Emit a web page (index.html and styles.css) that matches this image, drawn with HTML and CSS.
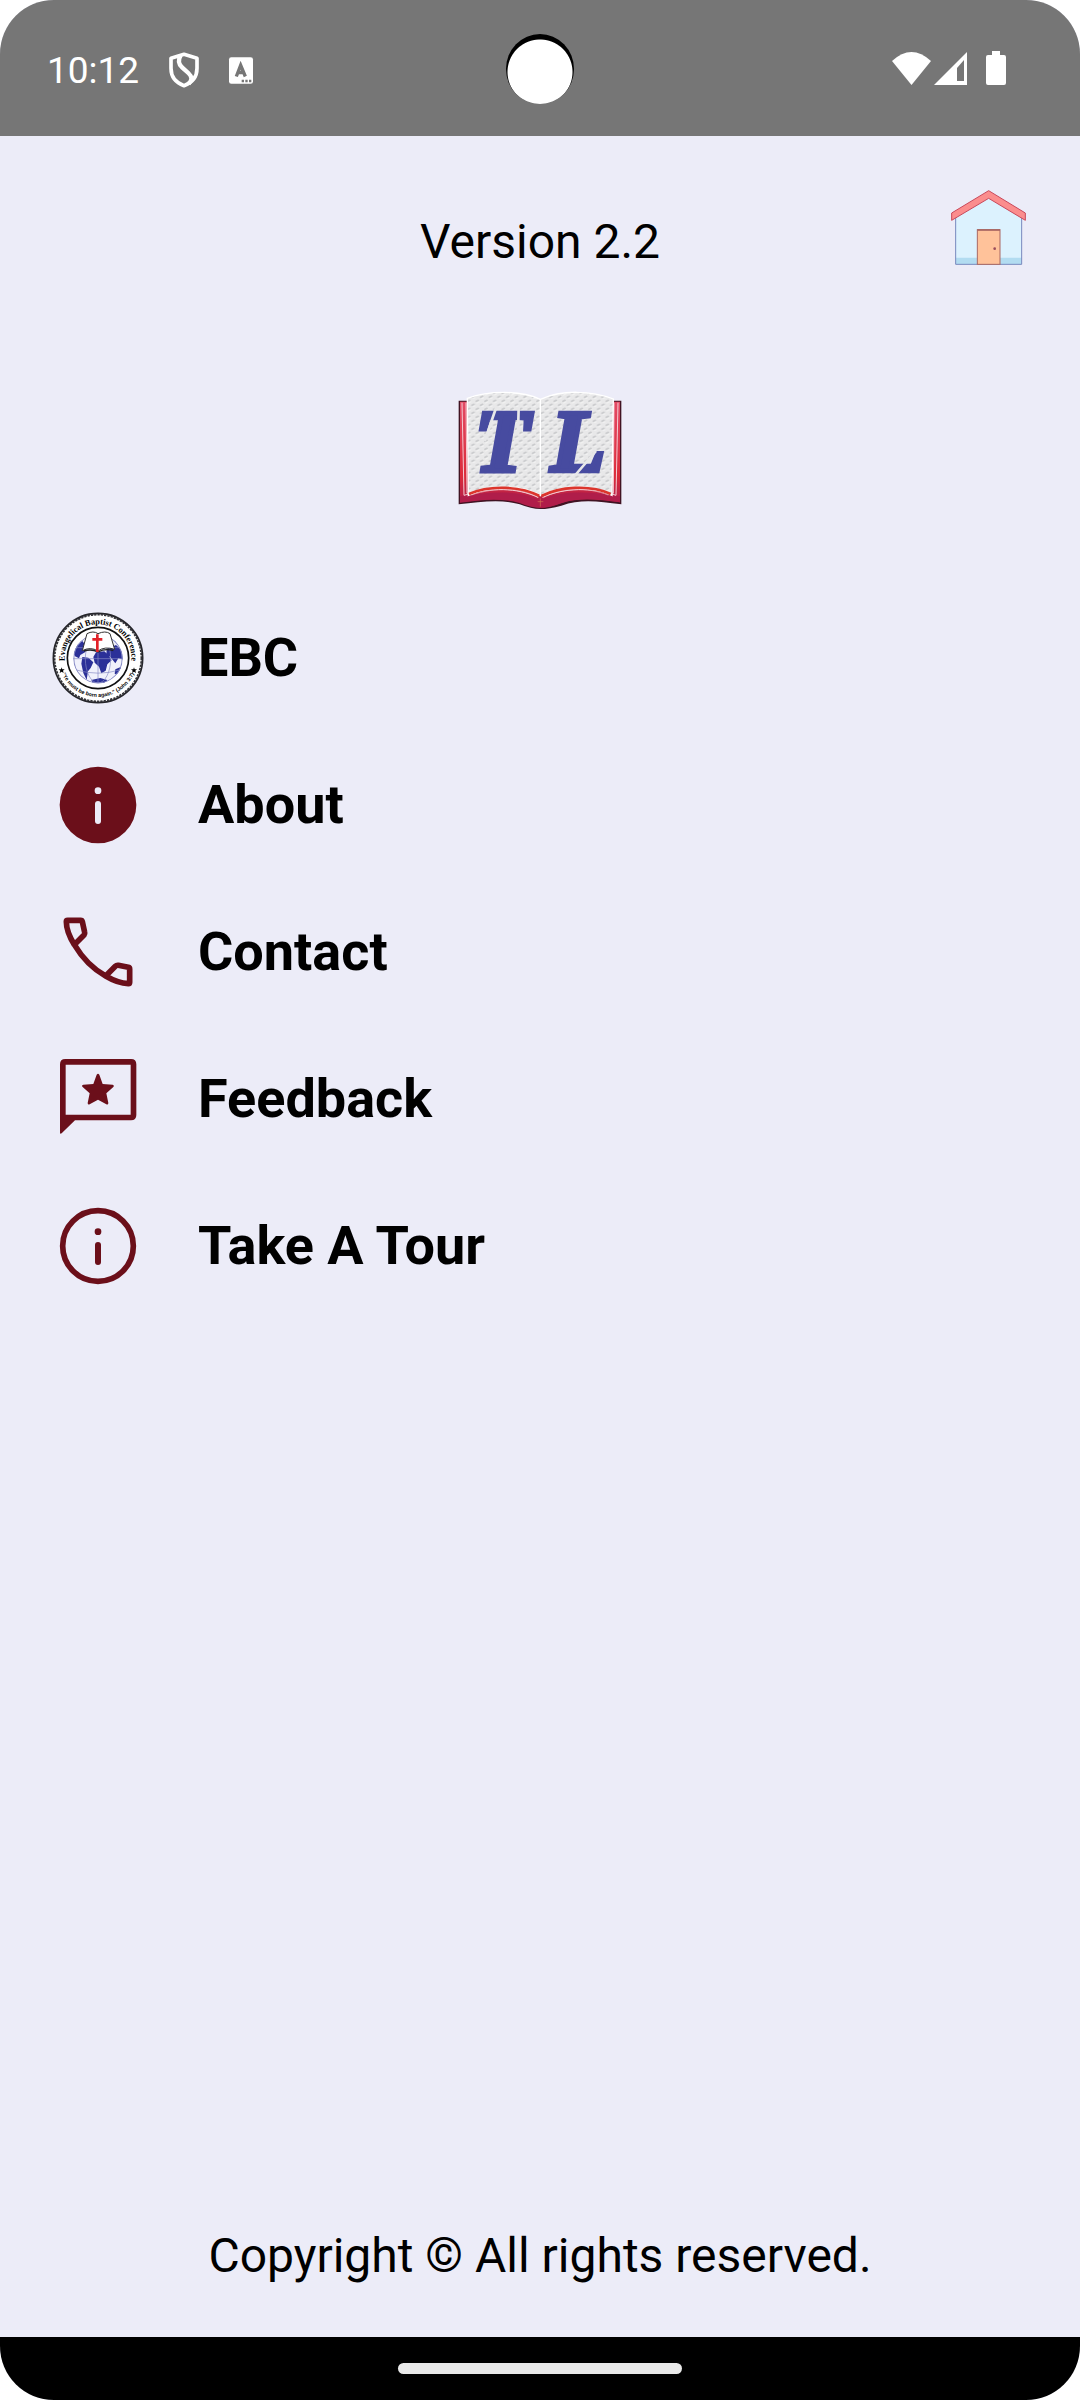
FILE: index.html
```
<!DOCTYPE html>
<html lang="en">
<head>
    <meta charset="UTF-8">
    <meta name="viewport" content="width=device-width, initial-scale=1.0">
    <title>TL - Menu</title>
    <link rel="stylesheet" href="styles.css">
</head>
<body>
    <div class="screen">
        <!-- Status bar -->
        <div class="status-bar">
            <div class="status-left">
                <span class="time">10:12</span>
                <svg class="shield" viewBox="0 0 90 106" fill="none" stroke="#fff" stroke-width="11" stroke-linejoin="round">
                    <path d="M45 6 L84 18 V48 C84 75 68 92 45 100 C22 92 6 75 6 48 V18 Z"/>
                    <path d="M35 9 C27 22 27 34 40 46 L58 62 C70 73 70 83 59 94" stroke-width="13"/>
                </svg>
                <svg class="keyboard" viewBox="0 0 72 80">
                    <rect width="72" height="80" rx="7" fill="#fff"/>
                    <path d="M22 58 L35 24 L49 58 M26 46 H45" fill="none" stroke="#767676" stroke-width="10"/>
                    <path d="M38 68h7v7h-7zM49 68h7v7h-7zM60 68h7v7h-7z" fill="#767676"/>
                </svg>
            </div>
            <div class="camera"></div>
            <div class="status-right">
                <svg class="wifi" viewBox="0 0 39 33" fill="#fff"><path d="M0 9 Q19.500 -9 39 9 L19.500 33 Z"/></svg>
                <svg class="signal" viewBox="0 0 33 33" fill="#fff"><path fill-rule="evenodd" d="M33 0 V33 H0 Z M30 8 L23 16 V29 H30 Z"/></svg>
                <svg class="battery" viewBox="0 0 20 34" fill="#fff"><path d="M6 0 H14 V4 H18 Q20 4 20 6 V32 Q20 34 18 34 H2 Q0 34 0 32 V6 Q0 4 2 4 H6 Z"/></svg>
            </div>
        </div>

        <header>
            <p class="version">Version 2.2</p>
            <button class="home" type="button" aria-label="Home">
                <svg viewBox="0 0 225 225">
                    <path d="M14 80 L113 20 L212 80 V223 H14 Z" fill="#dcf2fe"/>
                    <path d="M14 203 H212 V223 H14 Z" fill="#b2dcf1"/>
                    <path d="M14 82 V223 H212 V82" fill="none" stroke="#7788bd" stroke-width="3"/>
                    <path d="M113 2 L223 69 V91 L113 25 L2 91 V69 Z" fill="#fb8d8d" stroke="#c9485a" stroke-width="3"/>
                    <rect x="79" y="119" width="68" height="104" fill="#ffc29a" stroke="#a96763" stroke-width="3"/>
                    <path d="M79 120 H147" stroke="#a96763" stroke-width="5"/>
                    <circle cx="131" cy="176" r="4" fill="#994d5c"/>
                </svg>
            </button>
        </header>

        <main>
            <!-- Open book logo -->
            <svg class="logo" viewBox="0 0 492 357" role="img" aria-label="TL">
                <defs>
                    <pattern id="dots" width="26" height="24" patternUnits="userSpaceOnUse">
                        <rect width="26" height="24" fill="#e8e8e9"/>
                        <path d="M3 7 L9 4 M16 19 L22 16" stroke="#cacbcd" stroke-width="5" stroke-linecap="round"/>
                        <path d="M5 12 L12 9 M18 24 L24 21" stroke="#f2f2f2" stroke-width="4" stroke-linecap="round"/>
                    </pattern>
                    <linearGradient id="cover" x1="0" y1="0" x2="0" y2="1">
                        <stop offset="0" stop-color="#e34a64"/>
                        <stop offset="0.700" stop-color="#dc2c3a"/>
                        <stop offset="1" stop-color="#a91c4f"/>
                    </linearGradient>
                </defs>
                <path d="M2 29 H490 V340 C420 331 370 323 310 344 Q273 354 247 354 Q220 354 185 340 C125 323 70 333 2 340 Z" fill="#401323"/>
                <path d="M6 32 H486 V334 C420 325 360 320 310 336 Q275 350 247 350 Q215 348 185 334 C125 318 70 326 6 334 Z" fill="url(#cover)"/>
                <path d="M6 316 C95 303 180 296 236 324 Q246 329 256 324 C320 296 400 303 486 316 V334 C410 322 365 319 310 337 Q273 351 247 351 Q218 350 185 336 C125 319 65 327 6 335 Z" fill="#b01d4a"/>
                <path d="M12 35 L18 313 C100 288 175 290 241 319 M24 35 L27 307 C110 283 180 285 242 314 M480 35 L474 313 C400 288 320 290 253 319 M468 35 L466 307 C385 283 315 285 252 314" fill="none" stroke="#f4ccd3" stroke-width="3"/>
                <path d="M28 22 C95 -2 190 -2 247 25 C310 -4 400 -2 466 24 L462 313 C425 295 385 286 340 289 Q280 294 248 314 Q210 290 155 289 C110 288 65 297 31 313 Z" fill="url(#dots)" stroke="#fff" stroke-width="4"/>
                <path d="M33 309 C100 280 190 287 245 315 M458 309 C395 280 305 287 250 315" fill="none" stroke="#dc352c" stroke-width="8"/>
                <path d="M40 312 C110 287 195 292 240 320 M451 312 C390 287 305 292 256 320" fill="none" stroke="#f4cbd0" stroke-width="2"/>
                <path d="M247 24 V315" stroke="#fff" stroke-width="4"/>
                <path d="M247 322 V347 M239 332 H256" stroke="#d77755" stroke-width="2"/>
                <text class="logo-letter" x="50" y="239">T</text>
                <text class="logo-letter" x="278" y="239">L</text>
                <!-- stencil cuts -->
                <path d="M115 48 L80 150 M182 48 L180 130 M352 252 L414 180" stroke="#e8e8e9" stroke-width="8"/>
            </svg>

            <nav>
                <a class="item" href="#ebc">
                    <svg class="icon" viewBox="0 0 276 276">
                        <defs>
                            <path id="arc-top" d="M47 178 A100 100 0 1 1 229 178"/>
                            <path id="arc-bottom" d="M24 170 A119 119 0 0 0 252 170"/>
                            <clipPath id="globe"><circle cx="138" cy="140" r="74"/></clipPath>
                        </defs>
                        <circle cx="138" cy="138" r="134" fill="#fff" stroke="#26262b" stroke-width="5"/>
                        <circle cx="138" cy="138" r="130" fill="none" stroke="#333338" stroke-width="5" stroke-dasharray="7 3"/>
                        <circle cx="138" cy="138" r="92" fill="none" stroke="#111" stroke-width="5"/>
                        <g clip-path="url(#globe)">
                            <circle cx="138" cy="140" r="74" fill="#f0f1fb"/>
                            <g fill="#2b3098">
                                <path d="M68 102 L91 87 L105 105 L99 121 L85 129 L81 139 L69 133 L61 118 Z"/>
                                <path d="M91 135 L109 137 L124 151 L116 168 L108 178 L104 204 L94 183 L88 155 Z"/>
                                <path d="M132 121 L157 118 L169 129 L179 145 L166 157 L161 176 L148 184 L141 164 L128 152 L124 135 Z"/>
                                <path d="M164 111 L192 99 L211 116 L214 143 L199 139 L190 154 L175 135 L163 129 Z"/>
                                <path d="M190 172 L206 165 L211 177 L200 189 L188 185 Z"/>
                                <path d="M118 204 L145 198 L166 204 L156 215 H124 Z"/>
                            </g>
                            <g fill="none" stroke="#8589c4" stroke-width="2">
                                <circle cx="138" cy="140" r="73" stroke-width="4"/>
                                <ellipse cx="138" cy="140" rx="38" ry="73"/>
                                <path d="M138 66 V214 M64 140 H212 M72 107 H204 M73 174 Q138 193 203 174"/>
                            </g>
                        </g>
                        <path d="M105 65 Q124 55 138 65 Q160 55 174 65 L188 112 Q158 102 138 117 Q115 103 91 116 Z" fill="#fff" stroke="#333" stroke-width="3"/>
                        <path d="M96 117 Q119 110 138 120 Q160 108 184 116" fill="none" stroke="#222" stroke-width="4"/>
                        <path d="M132 67 H140 V78 H151 V86 H140 V120 H132 V86 H121 V78 H132 Z" fill="#e22229"/>
                        <text class="seal-name" text-anchor="middle"><textPath href="#arc-top" startOffset="50%">Evangelical Baptist Conference</textPath></text>
                        <text class="seal-verse" text-anchor="middle"><textPath href="#arc-bottom" startOffset="50%">"Ye must be born again." (John 3:7)</textPath></text>
                        <path id="star" d="M29 166 L31 172 H38 L33 176 L35 183 L29 179 L23 183 L25 176 L20 172 H27 Z"/>
                        <use href="#star" x="217"/>
                    </svg>
                    <span>EBC</span>
                </a>
                <a class="item" href="#about">
                    <svg class="icon" viewBox="0 0 276 276">
                        <circle cx="138" cy="138" r="115" fill="#6b0f1a"/>
                        <circle cx="138" cy="95" r="10" fill="#ececf8"/>
                        <rect x="129" y="126" width="18" height="69" rx="9" fill="#ececf8"/>
                    </svg>
                    <span>About</span>
                </a>
                <a class="item" href="#contact">
                    <svg class="icon" viewBox="0 0 276 276" fill="none" stroke="#6b0f1a" stroke-width="17" stroke-linejoin="round">
                        <path d="M67 116 C51 90 43 67 43 47 Q43 43 47 43 H86 Q90 43 91 47 L98 79 Q99 83 96 87 L67 116 C92 158 121 188 161 210 L190 181 Q194 177 199 178 L229 184 Q233 185 233 189 V229 Q233 233 229 233 C207 232 183 223 161 210"/>
                    </svg>
                    <span>Contact</span>
                </a>
                <a class="item" href="#feedback">
                    <svg class="icon" viewBox="0 0 276 276" fill="#6b0f1a">
                        <path fill-rule="evenodd" d="M40 18 H237 Q253 18 253 34 V186 Q253 202 237 202 H69 L29 241 Q24 244 24 239 V34 Q24 18 40 18 Z M41 35 V185 H236 V35 Z"/>
                        <path d="M134 65 Q138 59 142 65 L152 93 L182 95 Q188 97 184 102 L163 121 L169 150 Q169 156 163 154 L138 140 L113 154 Q107 156 107 150 L113 121 L92 102 Q87 97 94 95 L124 93 Z"/>
                    </svg>
                    <span>Feedback</span>
                </a>
                <a class="item" href="#tour">
                    <svg class="icon" viewBox="0 0 276 276" fill="#6b0f1a">
                        <circle cx="138" cy="138" r="106" fill="none" stroke="#6b0f1a" stroke-width="17"/>
                        <circle cx="138" cy="95" r="10"/>
                        <rect x="129" y="126" width="18" height="69" rx="9"/>
                    </svg>
                    <span>Take A Tour</span>
                </a>
            </nav>
        </main>

        <footer>Copyright © All rights reserved.</footer>
        <div class="nav-bar"><div class="handle"></div></div>
    </div>
</body>
</html>
```

FILE: styles.css
```
/* Global Styles */
* {
    box-sizing: border-box;
}
body {
    margin: 0;
    background: #fff;
    color: #000;
    font-family: Roboto, sans-serif;
    font-size: 48px;
}
svg {
    display: block;
    flex: none;
    overflow: visible;
}
.screen {
    display: flex;
    flex-direction: column;
    min-height: 100vh;
    background: #ececf8;
    border-radius: 54px;
    overflow: hidden;
}

/* Status bar */
.status-bar {
    display: grid;
    grid-template-columns: 1fr auto 1fr;
    align-items: center;
    height: 136px;
    padding: 0 74px 0 47px;
    background: #767676;
    position: relative;
}
.status-left, .status-right {
    display: flex;
    align-items: center;
}
.status-left {
    padding-top: 4px;
    color: #fff;
    font-size: 37px;
    gap: 30px;
}
.status-right {
    grid-column: 3;
    justify-content: flex-end;
    gap: 3px;
}
.shield {
    width: 30px;
    height: 36px;
}
.keyboard {
    width: 24px;
    height: 27px;
}
.wifi {
    width: 39px;
    height: 33px;
}
.signal {
    width: 33px;
    height: 33px;
}
.battery {
    width: 20px;
    height: 34px;
    margin-left: 16px;
}
/* Camera cutout sits over the bar */
.camera {
    position: absolute;
    top: 34px;
    left: 50%;
    width: 68px;
    height: 70px;
    margin-left: -34px;
    border-radius: 50%;
    background: radial-gradient(circle at 50% 38px, #fff 32px, #000 33px);
}

/* Header */
header {
    display: grid;
    grid-template-columns: 1fr auto 1fr;
    padding: 54px 54px 0;
}
.version {
    grid-column: 2;
    margin: 0;
    line-height: 104px;
}
.home {
    justify-self: end;
    align-self: start;
    padding: 0;
    border: 0;
    background: none;
}
.home svg {
    width: 75px;
    height: 75px;
}

/* Menu */
main {
    flex: 1;
}
.logo {
    width: 164px;
    height: 119px;
    margin: 97px auto 102px;
}
.logo-letter {
    font-family: "Liberation Serif", serif;
    font-size: 268px;
    font-weight: bold;
    font-style: italic;
    fill: #474ba0;
    stroke: #474ba0;
    stroke-width: 14px;
}
nav {
    display: flex;
    flex-direction: column;
    align-items: flex-start;
    gap: 55px;
    padding: 0 52px;
}
.item {
    display: flex;
    align-items: center;
    gap: 54px;
    color: #000;
    font-size: 54px;
    font-weight: bold;
    line-height: 64px;
    text-decoration: none;
}
.icon {
    width: 92px;
    height: 92px;
}
.seal-name {
    font-family: "Liberation Serif", serif;
    font-size: 25px;
    font-weight: bold;
}
.seal-verse {
    font-family: "Liberation Sans", sans-serif;
    font-size: 16px;
    font-weight: bold;
}

footer {
    padding: 0 52px 53px;
    line-height: 56px;
    text-align: center;
}

/* Gesture bar */
.nav-bar {
    display: flex;
    align-items: center;
    justify-content: center;
    height: 63px;
    background: #000;
}
.handle {
    width: 284px;
    height: 11px;
    border-radius: 6px;
    background: #e9e9e9;
}
```
